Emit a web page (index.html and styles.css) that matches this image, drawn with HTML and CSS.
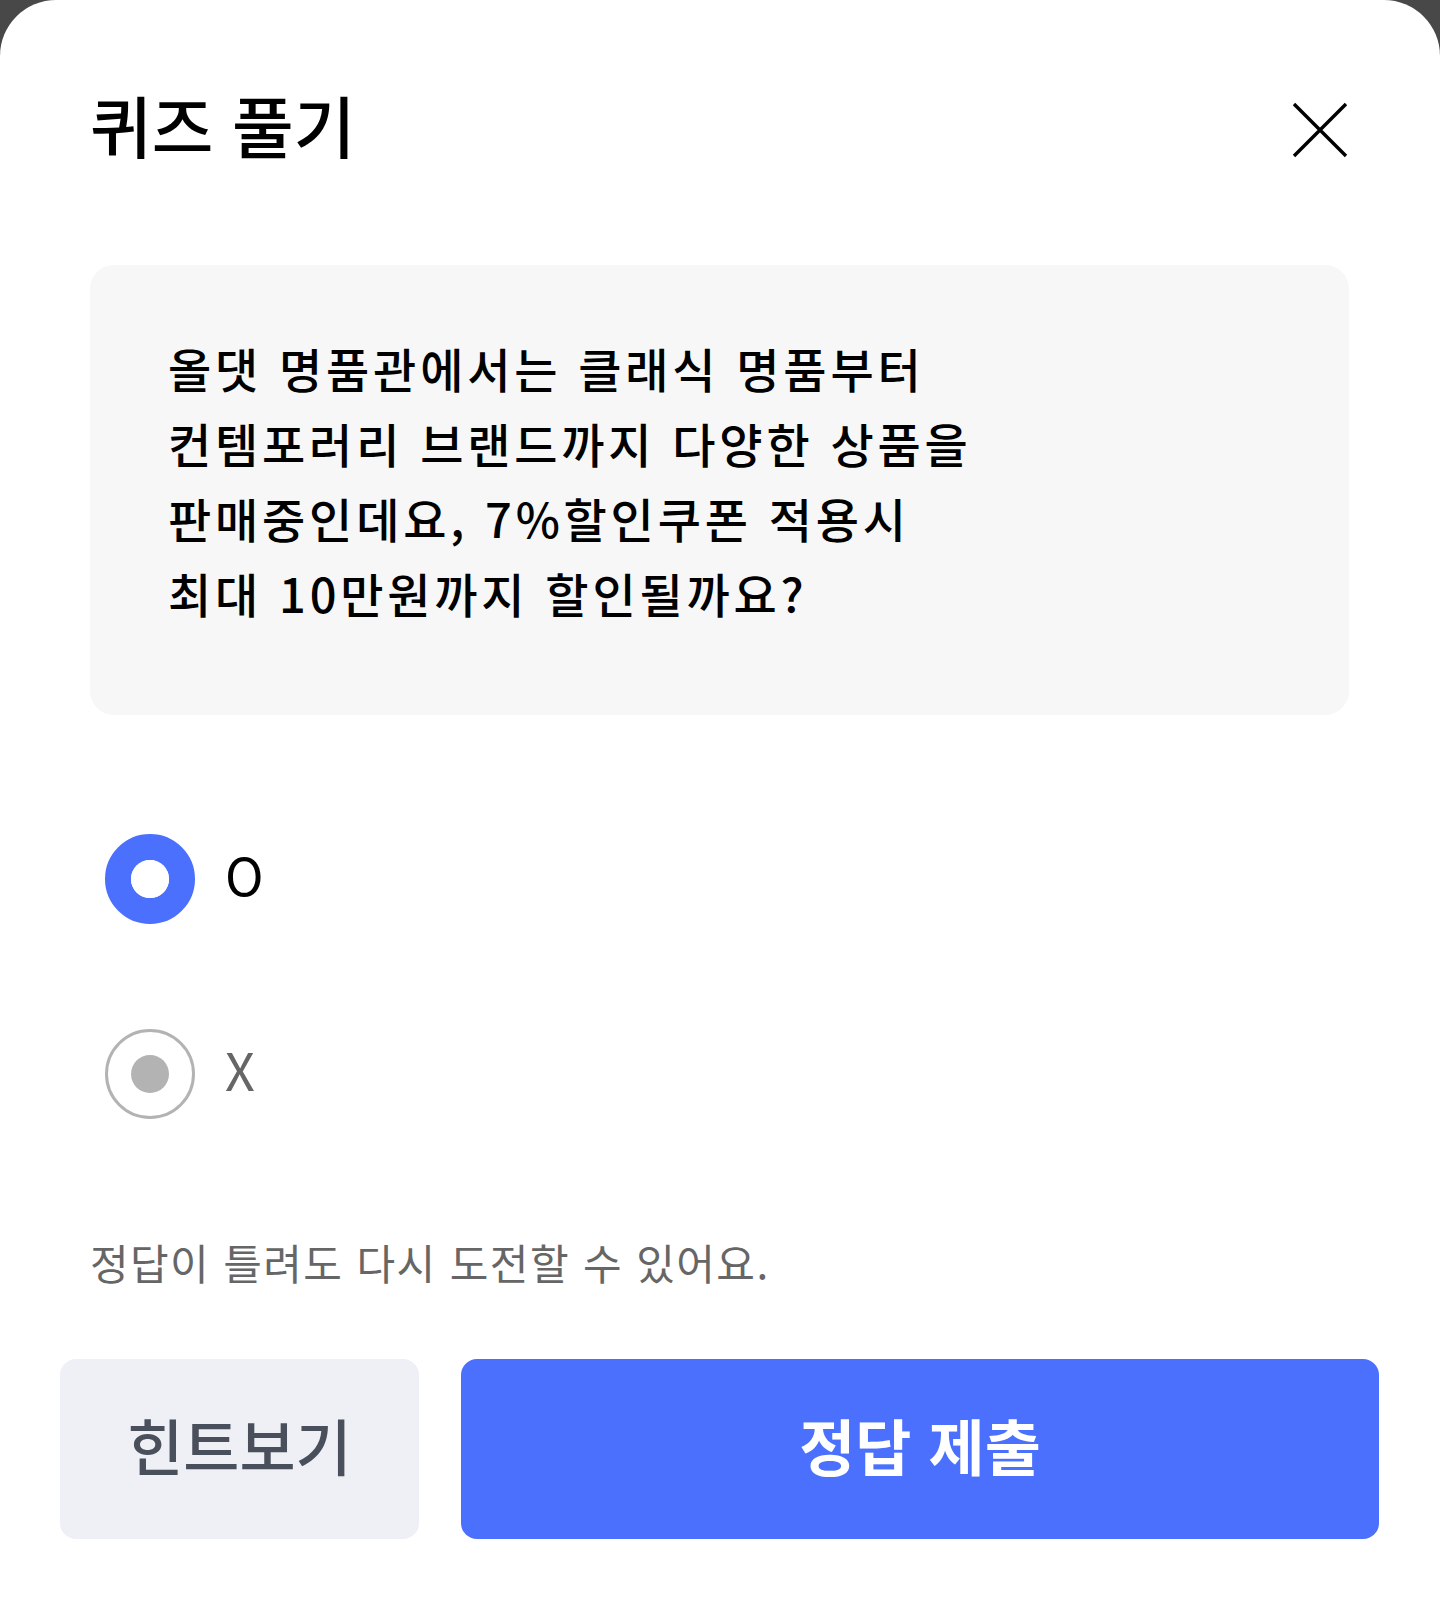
FILE: index.html
```html
<!DOCTYPE html>
<html lang="ko">
<head>
<meta charset="utf-8">
<title>퀴즈 풀기</title>
<link rel="stylesheet" href="styles.css">
</head>
<body>
<div class="sheet">
  <div class="header">
    <h1 class="title">퀴즈 풀기</h1>
    <button class="close" aria-label="닫기">
      <svg width="56" height="56" viewBox="0 0 56 56"><path d="M2 2 L54 54 M54 2 L2 54" stroke="#000" stroke-width="3.4" fill="none"/></svg>
    </button>
  </div>
  <div class="question">
    <p>올댓 명품관에서는 클래식 명품부터<br>컨템포러리 브랜드까지 다양한 상품을<br>판매중인데요, 7%할인쿠폰 적용시<br>최대 10만원까지 할인될까요?</p>
  </div>
  <div class="options">
    <label class="option selected"><span class="radio"></span><span class="label">O</span></label>
    <label class="option"><span class="radio"></span><span class="label">X</span></label>
  </div>
  <p class="note">정답이 틀려도 다시 도전할 수 있어요.</p>
  <div class="actions">
    <button class="btn hint">힌트보기</button>
    <button class="btn submit">정답 제출</button>
  </div>
</div>
</body>
</html>
```
FILE: styles.css
```css
html, body {
  margin: 0;
  padding: 0;
  background: #484848;
}
body {
  font-family: "Noto Sans CJK KR", "Noto Sans", sans-serif;
}
.sheet {
  background: #fff;
  border-radius: 56px 56px 0 0;
  min-height: 1597px;
  box-sizing: border-box;
  padding-top: 86px;
}
.header {
  display: flex;
  justify-content: space-between;
  align-items: flex-start;
  padding: 0 92px 0 90px;
}
.title {
  margin: 0;
  font-size: 67px;
  line-height: 76px;
  font-weight: 500;
  letter-spacing: 0px;
  color: #000;
}
.close {
  border: 0;
  background: none;
  padding: 0;
  margin-top: 16px;
  width: 56px;
  height: 56px;
}
.close svg { display: block; }
.question {
  margin: 103px 91px 0 90px;
  background: #f7f7f7;
  border-radius: 24px;
  padding: 65px 78px 85px;
}
.question p {
  margin: 0;
  font-size: 47px;
  line-height: 75px;
  font-weight: 500;
  letter-spacing: 3.8px;
  color: #000;
}
.options {
  display: flex;
  flex-direction: column;
  gap: 105px;
  margin-top: 119px;
  padding-left: 105px;
}
.option {
  display: flex;
  align-items: center;
  gap: 30px;
  height: 90px;
}
.radio {
  width: 90px;
  height: 90px;
  border-radius: 50%;
  box-sizing: border-box;
  border: 3px solid #b3b3b3;
  display: flex;
  align-items: center;
  justify-content: center;
}
.radio::after {
  content: "";
  width: 38px;
  height: 38px;
  border-radius: 50%;
  background: #b3b3b3;
}
.option.selected .radio {
  border: 26px solid #4a70fd;
}
.option.selected .radio::after {
  background: #fff;
}
.label {
  font-size: 52px;
  line-height: 1;
  margin-bottom: 10px;
  color: #666;
}
.option.selected .label { color: #000; }
.note {
  margin: 115px 0 0 90px;
  font-size: 42px;
  line-height: 56px;
  letter-spacing: 1.4px;
  color: #666;
}
.actions {
  display: flex;
  gap: 42px;
  padding: 0 61px 0 60px;
  margin-top: 69px;
}
.btn {
  border: 0;
  height: 180px;
  border-radius: 16px;
  font-family: inherit;
  font-size: 61px;
  padding: 0 0 10px;
}
.hint {
  width: 359px;
  flex: none;
  background: #eef0f5;
  color: #4a4f5c;
  font-weight: 500;
  letter-spacing: 0px;
}
.submit {
  flex: 1;
  background: #4a70fd;
  color: #fff;
  font-weight: 700;
  letter-spacing: 0px;
}
```
